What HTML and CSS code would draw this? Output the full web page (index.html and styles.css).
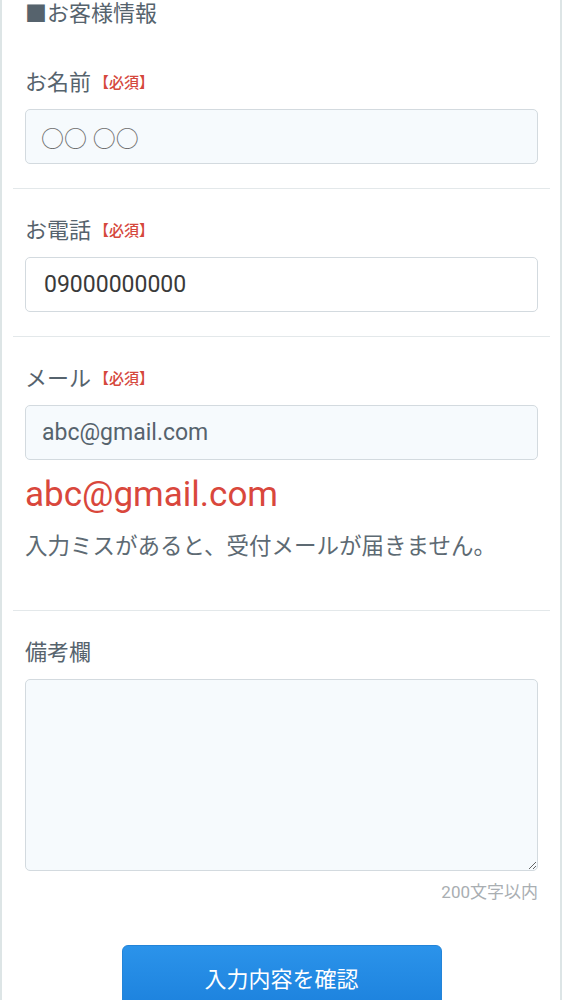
FILE: index.html
```html
<!DOCTYPE html>
<html lang="ja">
<head>
<meta charset="utf-8">
<link rel="stylesheet" href="styles.css">
</head>
<body>
<div class="page">
  <h2 class="heading">■お客様情報</h2>
  <div class="section">
    <label class="label">お名前<span class="req">【必須】</span></label>
    <input class="field filled name" type="text" value="○○ ○○">
  </div>
  <div class="section">
    <label class="label">お電話<span class="req">【必須】</span></label>
    <input class="field phone" type="text" value="09000000000">
  </div>
  <div class="section mail">
    <label class="label">メール<span class="req">【必須】</span></label>
    <input class="field filled email" type="text" value="abc@gmail.com">
    <p class="echo">abc@gmail.com</p>
    <p class="note">入力ミスがあると、受付メールが届きません。</p>
  </div>
  <div class="section last">
    <label class="label">備考欄</label>
    <textarea class="field area"></textarea>
    <p class="counter">200文字以内</p>
    <button class="submit" type="button">入力内容を確認</button>
  </div>
</div>
</body>
</html>
```

FILE: styles.css
```css
html, body {
  margin: 0;
  padding: 0;
  background: #ffffff;
}
body {
  font-family: Roboto, "Noto Sans CJK JP", sans-serif;
  color: #56636d;
}
.page {
  box-sizing: border-box;
  width: 562px;
  min-height: 1000px;
  border-left: 2px solid #dde5e6;
  border-right: 2px solid #dde5e6;
  overflow: hidden;
}
.heading {
  margin: 0 10px 0 11px;
  padding: 0 12px;
  font-size: 22px;
  font-weight: 400;
  line-height: 28px;
  color: #56636d;
}
.section {
  margin: 0 10px 0 11px;
  padding: 27px 12px 24px;
  border-bottom: 1px solid #e3e8ea;
  display: flex;
  flex-direction: column;
}
.heading + .section {
  padding-top: 40px;
}
.section.mail {
  padding-bottom: 48px;
}
.section.last {
  border-bottom: none;
  padding-bottom: 0;
}
.label {
  display: block;
  font-size: 22px;
  line-height: 30px;
  color: #56636d;
  margin-bottom: 11px;
}
.req {
  font-size: 15px;
  font-weight: 500;
  color: #d5483c;
  margin-left: 3px;
  vertical-align: 2px;
}
.field {
  box-sizing: border-box;
  width: 100%;
  height: 55px;
  margin: 0;
  padding: 0 16px;
  border: 1px solid #d3dadf;
  border-radius: 5px;
  background: #ffffff;
  font-family: Roboto, "Noto Sans CJK JP", sans-serif;
  font-size: 23px;
  outline: none;
}
.field.filled {
  background: #f6fafd;
}
.name {
  color: #6d6d6d;
  padding-left: 15px;
}
.phone {
  color: #3a3a3a;
  padding-left: 18px;
}
.email {
  color: #56636d;
}
.echo {
  margin: 15px 0 0;
  font-size: 35px;
  line-height: 40px;
  color: #d9473c;
}
.note {
  margin: 15px 0 0;
  font-size: 22.5px;
  line-height: 32px;
  color: #5d6a73;
}
.area {
  height: 192px;
  background: #f6fafd;
  resize: vertical;
  padding: 10px 16px;
  display: block;
}
.counter {
  margin: 10px 0 0;
  text-align: right;
  font-size: 17px;
  line-height: 22px;
  color: #a9aeb2;
}
.submit {
  display: block;
  align-self: center;
  width: 320px;
  height: 70px;
  margin: 42px 0 0;
  padding: 0;
  border: 1px solid #2384d8;
  border-radius: 6px;
  background: linear-gradient(#2b93ea, #1b80dc);
  color: #ffffff;
  font-family: Roboto, "Noto Sans CJK JP", sans-serif;
  font-size: 22px;
  line-height: 30px;
}
```
